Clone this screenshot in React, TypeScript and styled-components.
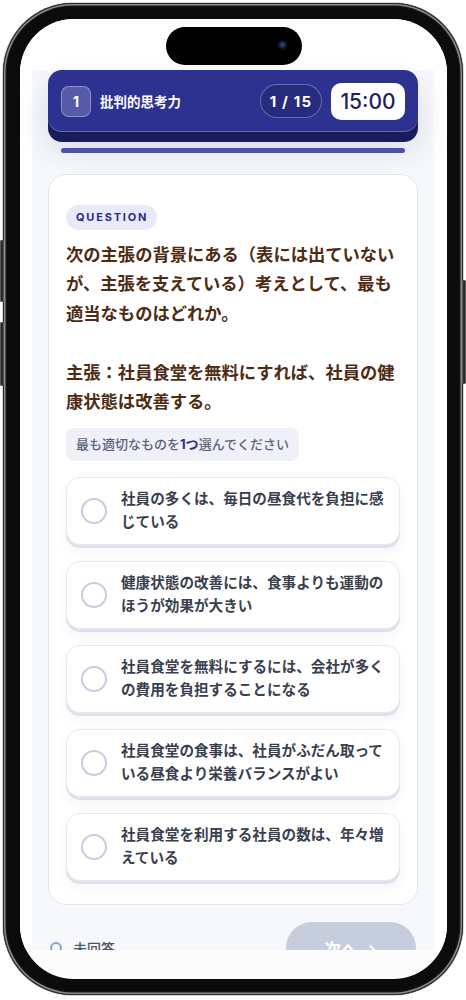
import React from "react";
import styled, { createGlobalStyle } from "styled-components";

const OPTIONS = [
  "社員の多くは、毎日の昼食代を負担に感じている",
  "健康状態の改善には、食事よりも運動のほうが効果が大きい",
  "社員食堂を無料にするには、会社が多くの費用を負担することになる",
  "社員食堂の食事は、社員がふだん取っている昼食より栄養バランスがよい",
  "社員食堂を利用する社員の数は、年々増えている",
];

const QUESTION =
  "次の主張の背景にある（表には出ていないが、主張を支えている）考えとして、最も適当なものはどれか。\n\n主張：社員食堂を無料にすれば、社員の健康状態は改善する。";

const App = () => {
  return (
    <>
      <GlobalStyle />
      <Phone>
        <SideButton $side="left" $top={237} $height={62} />
        <SideButton $side="left" $top={319} $height={64} />
        <SideButton $side="right" $top={277} $height={104} />
        <Screen>
          <Island>
            <Camera />
          </Island>
          <Viewport>
            <Panel>
              <Header>
                <SectionBadge>1</SectionBadge>
                <SectionTitle>批判的思考力</SectionTitle>
                <Counter>1 / 15</Counter>
                <Timer>15:00</Timer>
              </Header>
              <Progress />
              <Card>
                <QuestionChip>QUESTION</QuestionChip>
                <QuestionText>{QUESTION}</QuestionText>
                <Hint>
                  最も適切なものを<strong>1つ</strong>選んでください
                </Hint>
                <OptionList>
                  {OPTIONS.map((text) => (
                    <Option key={text}>
                      <Radio />
                      <OptionText>{text}</OptionText>
                    </Option>
                  ))}
                </OptionList>
              </Card>
              <BottomBar>
                <Status>
                  <StatusIcon />
                  <span>未回答</span>
                </Status>
                <NextButton>次へ →</NextButton>
              </BottomBar>
            </Panel>
          </Viewport>
        </Screen>
      </Phone>
    </>
  );
};

const GlobalStyle = createGlobalStyle`
  html, body {
    margin: 0;
    padding: 0;
    background: #ffffff;
  }
  body {
    font-family: "Inter", "Noto Sans CJK JP", sans-serif;
  }
  * {
    box-sizing: border-box;
  }
`;

const Phone = styled.div`
  position: relative;
  width: 460px;
  height: 992px;
  margin: 3px;
  padding: 16px 16px 16px 17px;
  border-radius: 70px;
  background: #0b0b0b;
  box-shadow: inset 0 0 0 1px #2a2a2a, inset 0 0 0 2.5px #8b8b8b,
    inset 0 0 0 4px #151515, 0 0 0 1px #d6d6d6;
`;

const SideButton = styled.span<{ $side: "left" | "right"; $top: number; $height: number }>`
  position: absolute;
  ${(p) => (p.$side === "left" ? "left: -3px;" : "right: -3px;")}
  top: ${(p) => p.$top}px;
  width: 4px;
  height: ${(p) => p.$height}px;
  border-radius: 2px;
  background: #2b2b2b;
  box-shadow: inset 0 0 0 1px #5a5a5a;
`;

const Screen = styled.div`
  position: relative;
  width: 100%;
  height: 100%;
  border-radius: 54px;
  overflow: hidden;
  background: #fcfcfd;
`;

const Island = styled.div`
  position: absolute;
  top: 8px;
  left: 50%;
  transform: translateX(-50%);
  width: 136px;
  height: 38px;
  border-radius: 19px;
  background: #000;
  z-index: 5;
`;

const Camera = styled.span`
  position: absolute;
  right: 15px;
  top: 14px;
  width: 9px;
  height: 9px;
  border-radius: 50%;
  background: radial-gradient(circle at 50% 40%, #2d4d8a 0, #0b1530 55%, #03060d 100%);
`;

const Viewport = styled.div`
  height: 931px;
  overflow: hidden;
  background: #ffffff;
`;

const Panel = styled.div`
  margin: 69px 13px 0 12px;
  padding: 0 16px 40px;
  min-height: 900px;
  background: #f7f8fb;
`;

const Header = styled.div`
  display: flex;
  align-items: center;
  height: 62px;
  margin-top: -18px;
  padding: 0 13px;
  border-radius: 14px;
  background: #2d3190;
  box-shadow: inset 0 -1px 0 rgba(255, 255, 255, 0.28), 0 10px 0 #1b1c5d,
    0 16px 30px rgba(45, 49, 144, 0.16);
`;

const SectionBadge = styled.div`
  display: flex;
  align-items: center;
  justify-content: center;
  width: 30px;
  height: 31px;
  border-radius: 8px;
  background: rgba(255, 255, 255, 0.2);
  border: 1px solid rgba(255, 255, 255, 0.35);
  color: #fff;
  font-size: 14px;
  font-weight: 700;
`;

const SectionTitle = styled.span`
  flex: 1;
  margin-left: 9px;
  color: #fff;
  font-size: 13.5px;
  font-weight: 700;
`;

const Counter = styled.div`
  display: flex;
  align-items: center;
  justify-content: center;
  width: 62px;
  height: 34px;
  border-radius: 17px;
  border: 1px solid rgba(255, 255, 255, 0.3);
  background: rgba(0, 0, 0, 0.12);
  color: #fff;
  font-size: 15px;
  font-weight: 700;
  letter-spacing: 1.2px;
  white-space: pre;
`;

const Timer = styled.div`
  display: flex;
  align-items: center;
  justify-content: center;
  width: 74px;
  height: 37px;
  margin-left: 9px;
  border-radius: 10px;
  background: #fff;
  color: #1f2261;
  font-size: 21px;
  font-weight: 500;
`;

const Progress = styled.div`
  height: 5px;
  margin: 16px 13px 0;
  border-radius: 3px;
  background: #4b50b2;
`;

const Card = styled.div`
  margin-top: 21px;
  padding: 30px 17px 23px;
  border: 1px solid #e2e5ee;
  border-radius: 18px;
  background: #fff;
`;

const QuestionChip = styled.span`
  display: inline-block;
  height: 25px;
  padding: 0 9px 0 10px;
  border-radius: 13px;
  background: #e9eaf7;
  color: #2b2f8a;
  font-size: 11px;
  font-weight: 700;
  line-height: 25px;
  letter-spacing: 1.8px;
`;

const QuestionText = styled.p`
  margin: 10px 0 0;
  color: #4e2c14;
  font-size: 17.3px;
  font-weight: 700;
  line-height: 1.7;
  white-space: pre-wrap;
`;

const Hint = styled.div`
  display: inline-block;
  margin-top: 12px;
  padding: 7px 10px;
  border-radius: 8px;
  background: #f0f1f8;
  color: #5c6376;
  font-size: 13px;
  font-weight: 500;
  line-height: 19px;

  strong {
    color: #2b2f8a;
    font-weight: 700;
  }
`;

const OptionList = styled.div`
  display: flex;
  flex-direction: column;
  gap: 16px;
  margin-top: 16px;
`;

const Option = styled.div`
  display: flex;
  align-items: center;
  gap: 14px;
  height: 68px;
  padding: 0 12px 0 14px;
  border: 1px solid #e6e9f1;
  border-radius: 14px;
  background: #fff;
  box-shadow: 0 3px 0 #dde1ec, 0 6px 14px rgba(30, 40, 90, 0.05);
  cursor: pointer;
`;

const Radio = styled.span`
  flex-shrink: 0;
  width: 26px;
  height: 26px;
  border-radius: 50%;
  border: 2px solid #c7cde0;
`;

const OptionText = styled.span`
  color: #3a3f4e;
  font-size: 14.6px;
  font-weight: 700;
  line-height: 23px;
`;

const BottomBar = styled.div`
  display: flex;
  align-items: center;
  justify-content: space-between;
  margin-top: 17px;
  padding: 0 2px;
`;

const Status = styled.div`
  display: flex;
  align-items: center;
  gap: 11px;
  color: #4d5366;
  font-size: 14px;
  font-weight: 500;
`;

const StatusIcon = styled.span`
  width: 12px;
  height: 12px;
  border-radius: 50%;
  border: 2px solid #8ea0c9;
`;

const NextButton = styled.button`
  width: 130px;
  height: 52px;
  border: none;
  border-radius: 26px;
  background: #c6cddc;
  color: #fff;
  font-family: inherit;
  font-size: 17px;
  font-weight: 700;
`;

export default App;
